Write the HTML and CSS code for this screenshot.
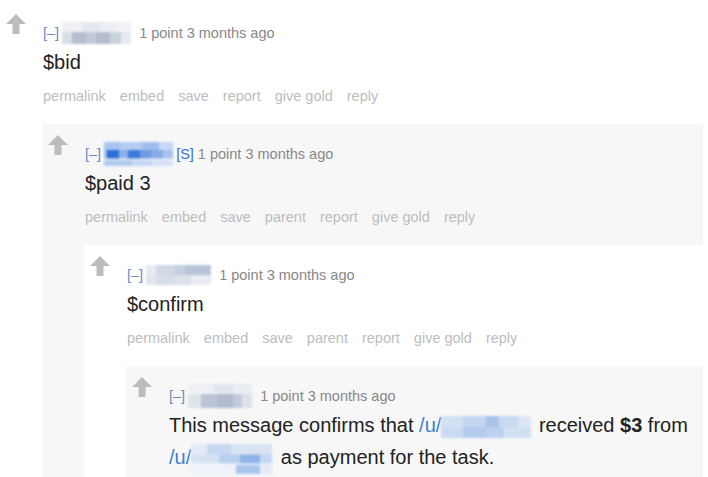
FILE: index.html
```html
<!DOCTYPE html>
<html lang="en">
<head>
  <meta charset="UTF-8" />
  <title>Comments</title>
  <link rel="stylesheet" href="styles.css">
</head>
<body>

  <div class="comment root">
    <div class="midcol">
      <svg class="arrow" viewBox="0 0 20 20"><polygon points="10,0 20,10 13.5,10 13.5,20 6.5,20 6.5,10 0,10"/></svg>
    </div>
    <div class="entry">
      <p class="tagline"><span class="expand">[–]</span><span class="mosaic m-grey"></span><span class="meta">1 point 3 months ago</span></p>
      <div class="md">$bid</div>
      <ul class="buttons">
        <li>permalink</li><li>embed</li><li>save</li><li>report</li><li>give gold</li><li>reply</li>
      </ul>

      <div class="comment alt">
        <div class="midcol">
          <svg class="arrow" viewBox="0 0 20 20"><polygon points="10,0 20,10 13.5,10 13.5,20 6.5,20 6.5,10 0,10"/></svg>
        </div>
        <div class="entry">
          <p class="tagline"><span class="expand">[–]</span><span class="mosaic m-blue"></span><span class="submitter">[S]</span><span class="meta tight">1 point 3 months ago</span></p>
          <div class="md">$paid 3</div>
          <ul class="buttons">
            <li>permalink</li><li>embed</li><li>save</li><li>parent</li><li>report</li><li>give gold</li><li>reply</li>
          </ul>

          <div class="comment">
            <div class="midcol">
              <svg class="arrow" viewBox="0 0 20 20"><polygon points="10,0 20,10 13.5,10 13.5,20 6.5,20 6.5,10 0,10"/></svg>
            </div>
            <div class="entry">
              <p class="tagline"><span class="expand">[–]</span><span class="mosaic m-light"></span><span class="meta">1 point 3 months ago</span></p>
              <div class="md">$confirm</div>
              <ul class="buttons">
                <li>permalink</li><li>embed</li><li>save</li><li>parent</li><li>report</li><li>give gold</li><li>reply</li>
              </ul>

              <div class="comment alt last">
                <div class="midcol">
                  <svg class="arrow" viewBox="0 0 20 20"><polygon points="10,0 20,10 13.5,10 13.5,20 6.5,20 6.5,10 0,10"/></svg>
                </div>
                <div class="entry">
                  <p class="tagline"><span class="expand">[–]</span><span class="mosaic m-light2"></span><span class="meta">1 point 3 months ago</span></p>
                  <div class="md">This message confirms that <span class="user">/u/</span><span class="mosaic m-body1"></span> received <strong>$3</strong> from <span class="user">/u/</span><span class="mosaic m-body2"></span> as payment for the task.</div>
                </div>
              </div>
            </div>
          </div>
        </div>
      </div>
    </div>
  </div>

</body>
</html>
```

FILE: styles.css
```css
body {
  margin: 0;
  padding: 3px 5px 0 0;
  background-color: #ffffff;
  font-family: "Liberation Sans", Arial, sans-serif;
  color: #222;
  overflow: hidden;
}

.comment {
  display: flex;
  padding: 11px 0 0 6px;
  background-color: #ffffff;
}

.comment.alt {
  background-color: #f7f7f8;
}

.entry .comment {
  margin-left: -1px;
  margin-top: 18px;
}

.entry .comment.last {
  padding-bottom: 30px;
}

.midcol {
  width: 20px;
  flex: none;
  margin-right: 17px;
}

.arrow {
  display: block;
  width: 20px;
  height: 20px;
  fill: #bcbcbc;
}

.entry {
  flex: 1;
  min-width: 0;
}

.tagline {
  margin: 9px 0 0;
  height: 20px;
  line-height: 20px;
  font-size: 14.5px;
  display: flex;
  align-items: center;
  white-space: nowrap;
}

.expand {
  color: #6a8cbf;
  margin-right: 3px;
}

.meta {
  color: #888;
  margin-left: 8px;
}

.meta.tight {
  margin-left: 4px;
}

.submitter {
  color: #3c6fd0;
  margin-left: 3px;
}

.md {
  margin-top: 3px;
  font-size: 20px;
  line-height: 32px;
  color: #222;
}

.md strong {
  font-weight: bold;
}

.user {
  color: #3d7fd6;
}

.buttons {
  list-style: none;
  margin: 8px 0 0;
  padding: 0;
  display: flex;
  gap: 14px;
  font-size: 14.5px;
  line-height: 20px;
  color: #bdbdbd;
}

/* blurred usernames */
.mosaic {
  display: inline-block;
  vertical-align: middle;
  filter: blur(0.8px);
}

.m-grey {
  width: 69px;
  height: 22px;
  background:
    linear-gradient(to right, #eef0f4 0 30%, #e4e8ef 30% 55%, #eceef3 55% 75%, #f0f2f5 75% 100%) top / 100% 45% no-repeat,
    linear-gradient(to right, #d8dde7 0 15%, #b6bfd1 15% 35%, #c1c9d8 35% 50%, #b4bdcf 50% 70%, #cbd2de 70% 85%, #e6e9ef 85% 100%) bottom / 100% 55% no-repeat;
}

.m-blue {
  width: 69px;
  height: 24px;
  background:
    linear-gradient(to right, #a8c4f0 0 25%, #b6cdf2 25% 55%, #9fbdee 55% 80%, #c7d8f4 80% 100%) top / 100% 35% no-repeat,
    linear-gradient(to right, #9ab9ec 0 5%, #2f6fd8 5% 22%, #8fb1ea 22% 35%, #3d7ad9 35% 52%, #6f9be3 52% 68%, #86abe7 68% 85%, #a8c3ef 85% 100%) center / 100% 40% no-repeat,
    linear-gradient(to right, #b3cbf1 0 40%, #c5d7f4 40% 70%, #d6e2f7 70% 100%) bottom / 100% 25% no-repeat;
}

.m-light {
  width: 65px;
  height: 20px;
  background:
    linear-gradient(to right, #e7ebf2 0 15%, #d2d9e6 15% 45%, #c6cfdf 45% 60%, #b8c4d8 60% 100%) top / 100% 50% no-repeat,
    linear-gradient(to right, #e1e6ee 0 15%, #d6dce8 15% 45%, #dde2eb 45% 70%, #e9ecf2 70% 100%) bottom / 100% 50% no-repeat;
}

.m-light2 {
  width: 64px;
  height: 24px;
  background:
    linear-gradient(to right, #eef0f4 0 40%, #e1e5ed 40% 70%, #e9ecf2 70% 100%) top / 100% 40% no-repeat,
    linear-gradient(to right, #dfe3ea 0 20%, #bcc5d6 20% 45%, #b2bcd0 45% 70%, #c3cbdb 70% 85%, #dde2ea 85% 100%) bottom / 100% 60% no-repeat;
}

.m-body1 {
  width: 90px;
  height: 22px;
  margin: 0 2px 0 0;
  background:
    linear-gradient(to right, #d4e1f3 0 25%, #c3d5f0 25% 50%, #a9c3ea 50% 65%, #c8d9f2 65% 85%, #dbe6f5 85% 100%) top / 100% 50% no-repeat,
    linear-gradient(to right, #c9daf2 0 25%, #b5cbed 25% 50%, #bdd1ef 50% 70%, #d2e0f4 70% 100%) bottom / 100% 50% no-repeat;
}

.m-body2 {
  width: 81px;
  height: 30px;
  margin: 0 3px 0 0;
  background:
    linear-gradient(to right, #e2eaf6 0 20%, #c6d7f0 20% 50%, #d8e3f4 50% 100%) top / 100% 35% no-repeat,
    linear-gradient(to right, #d6e2f4 0 35%, #b9cfee 35% 60%, #8fb3e6 60% 85%, #c4d6f1 85% 100%) center / 100% 35% no-repeat,
    linear-gradient(to right, #eef2f9 0 55%, #a9c5ec 55% 85%, #e3eaf6 85% 100%) bottom / 100% 30% no-repeat;
}
```
